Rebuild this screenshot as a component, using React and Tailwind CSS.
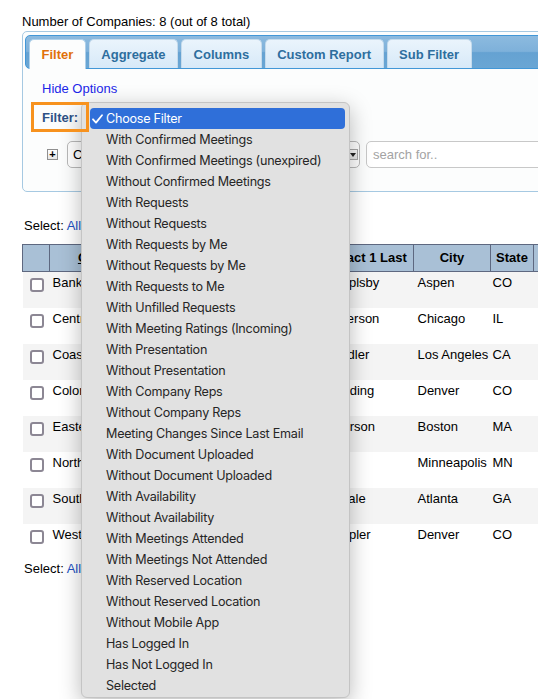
import React from "react";

const menuItems = [
  "With Confirmed Meetings",
  "With Confirmed Meetings (unexpired)",
  "Without Confirmed Meetings",
  "With Requests",
  "Without Requests",
  "With Requests by Me",
  "Without Requests by Me",
  "With Requests to Me",
  "With Unfilled Requests",
  "With Meeting Ratings (Incoming)",
  "With Presentation",
  "Without Presentation",
  "With Company Reps",
  "Without Company Reps",
  "Meeting Changes Since Last Email",
  "With Document Uploaded",
  "Without Document Uploaded",
  "With Availability",
  "Without Availability",
  "With Meetings Attended",
  "With Meetings Not Attended",
  "With Reserved Location",
  "Without Reserved Location",
  "Without Mobile App",
  "Has Logged In",
  "Has Not Logged In",
  "Selected",
];

const rows = [
  ["Bankers Trust", "Greg", "Gramplsby", "Aspen", "CO"],
  ["Central Holdings", "Anna", "Emmerson", "Chicago", "IL"],
  ["Coastal Ventures", "Mark", "Chandler", "Los Angeles", "CA"],
  ["Colorado Capital", "Lisa", "Spaulding", "Denver", "CO"],
  ["Eastern Partners", "Tom", "Halvorson", "Boston", "MA"],
  ["Northstar Group", "", "", "Minneapolis", "MN"],
  ["Southern Equity", "Jill", "Goodale", "Atlanta", "GA"],
  ["Westfield Inc", "Paul", "Grampler", "Denver", "CO"],
];

const tabs = ["Filter", "Aggregate", "Columns", "Custom Report", "Sub Filter"];

function Checkbox() {
  return (
    <div className="w-[14px] h-[14px] rounded-[3px] border-2 border-[#8c8794] bg-white" />
  );
}

export default function App() {
  return (
    <div className="relative w-[538px] h-[699px] overflow-hidden bg-white text-[13px] text-black font-['Liberation_Sans',Arial,sans-serif]">
      <div className="pl-[22px] w-[760px]">
        <div className="pt-[14px] leading-[16px]">Number of Companies: 8 (out of 8 total)</div>

        {/* Panel */}
        <div className="mt-[1px] w-[560px] border border-[#a6c9e2] rounded-[5px] bg-[#fcfdfd] pt-[3px] px-[2px]">
          <div className="h-[34px] border border-[#4297d7] rounded-[5px] flex items-end pl-[3px] gap-[3px] bg-[linear-gradient(#8cbadf_0%,#7eb1da_48%,#65a2d2_52%,#6aa6d4_100%)]">
            {tabs.map((t, i) =>
              i === 0 ? (
                <div
                  key={t}
                  className="h-[30px] mb-[-1px] px-[11.5px] flex items-center border border-b-0 border-[#aed0ea] rounded-t-[5px] bg-[#fcfdfd] font-bold text-[#e17009] leading-[15px]"
                >
                  {t}
                </div>
              ) : (
                <div
                  key={t}
                  className="h-[29px] px-[11.5px] flex items-center border border-b-0 border-[#c5dbec] rounded-t-[5px] bg-[linear-gradient(#eaf4fc,#d7e9f8)] font-bold text-[#2e6e9e] leading-[15px]"
                >
                  {t}
                </div>
              )
            )}
          </div>

          <div className="pl-[17px] pb-[23px]">
            <div className="pt-[12px] leading-[15px] text-[#1c27e8]">Hide Options</div>
            <div className="mt-[14px] leading-[15px] font-bold text-[#2e5286]">Filter:</div>
            <div className="mt-[16px] h-[27px] flex items-center">
              <div className="ml-[5px] w-[11px] h-[11px] border border-[#8f8f8f] bg-[linear-gradient(#ffffff,#e6e6e6)] flex items-center justify-center text-[11px] leading-none font-bold">
                +
              </div>
              <div className="ml-[9px] w-[293px] h-[27px] rounded-[5px] border border-[#b9b9b9] bg-white flex items-center justify-between pl-[5px]">
                <span className="leading-[15px]">Choose Filter</span>
                <div className="mr-[1px] w-[10px] h-[11px] border border-[#a8a8a8] bg-[linear-gradient(#fafafa,#e4e4e4)] flex items-center justify-center">
                  <svg width="6" height="4" viewBox="0 0 6 4">
                    <path d="M0 0 L6 0 L3 4 Z" fill="#222" />
                  </svg>
                </div>
              </div>
              <div className="ml-[6px] w-[200px] h-[27px] rounded-[5px] border border-[#c8c8c8] bg-white flex items-center pl-[6px] text-[#a3a3a3]">
                search for..
              </div>
            </div>
          </div>
        </div>

        <div className="mt-[26px] leading-[15px] pl-[2px]">
          Select: <span className="text-[#2152c4]">All</span>
        </div>

        <table className="mt-[11px] table-fixed border-collapse w-[611px]">
          <colgroup>
            <col className="w-[27px]" />
            <col className="w-[116px]" />
            <col className="w-[145px]" />
            <col className="w-[103px]" />
            <col className="w-[77px]" />
            <col className="w-[43px]" />
            <col className="w-[100px]" />
          </colgroup>
          <thead>
            <tr className="h-[27px] bg-[#a9c0d6]">
              <th className="border border-[#5e6880]"></th>
              <th className="border border-[#5e6880] font-bold underline">Company</th>
              <th className="border border-[#5e6880] font-bold">Contact 1 First</th>
              <th className="border border-[#5e6880] font-bold whitespace-nowrap">Contact 1 Last</th>
              <th className="border border-[#5e6880] font-bold">City</th>
              <th className="border border-[#5e6880] font-bold">State</th>
              <th className="border border-[#5e6880]"></th>
            </tr>
          </thead>
          <tbody>
            {rows.map((r, i) => (
              <tr key={i} className={`h-[36px] align-top ${i % 2 === 0 ? "bg-[#f4f4f4]" : "bg-white"}`}>
                <td className="pt-[6px] pl-[7px]">
                  <Checkbox />
                </td>
                <td className="pt-[3px] pl-[3px] leading-[15px] whitespace-nowrap overflow-hidden">{r[0]}</td>
                <td className="pt-[3px] pl-[3px] leading-[15px]">{r[1]}</td>
                <td className="pt-[3px] pl-[6px] leading-[15px]">{r[2]}</td>
                <td className="pt-[3px] pl-[4px] leading-[15px] whitespace-nowrap">{r[3]}</td>
                <td className="pt-[3px] pl-[2px] leading-[15px]">{r[4]}</td>
                <td className="pt-[3px] pl-[3px] leading-[15px]"></td>
              </tr>
            ))}
          </tbody>
        </table>

        <div className="mt-[1px] leading-[15px] pl-[2px]">
          Select: <span className="text-[#2152c4]">All</span>
        </div>
      </div>

      {/* Native select popup menu */}
      <div className="absolute left-[81px] top-[102px] w-[269px] h-[596px] rounded-[6px] border border-[#c4c4c4] bg-[#e1e1e1] shadow-[0_6px_22px_rgba(0,0,0,0.28)] pt-[5px] font-['Inter','Helvetica',sans-serif] text-[12.6px] tracking-[-0.25px] text-[#262626]">
        <div className="ml-[8px] mr-[4px] h-[21px] rounded-[4px] bg-[#2f6fd9] text-white flex items-center">
          <svg className="ml-[2px]" width="11" height="10" viewBox="0 0 11 10">
            <path d="M1 5.3 L4 8.6 L10 1.2" fill="none" stroke="white" strokeWidth="1.8" strokeLinecap="round" strokeLinejoin="round" />
          </svg>
          <span className="ml-[3px] leading-[15px]">Choose Filter</span>
        </div>
        {menuItems.map((m) => (
          <div key={m} className="ml-[8px] mr-[4px] h-[21px] flex items-center pl-[16px] leading-[15px] whitespace-nowrap">
            {m}
          </div>
        ))}
      </div>

      {/* Orange highlight annotation */}
      <div className="absolute left-[31px] top-[102px] w-[58px] h-[30px] border-[3px] border-[#f7921e]" />
    </div>
  );
}
